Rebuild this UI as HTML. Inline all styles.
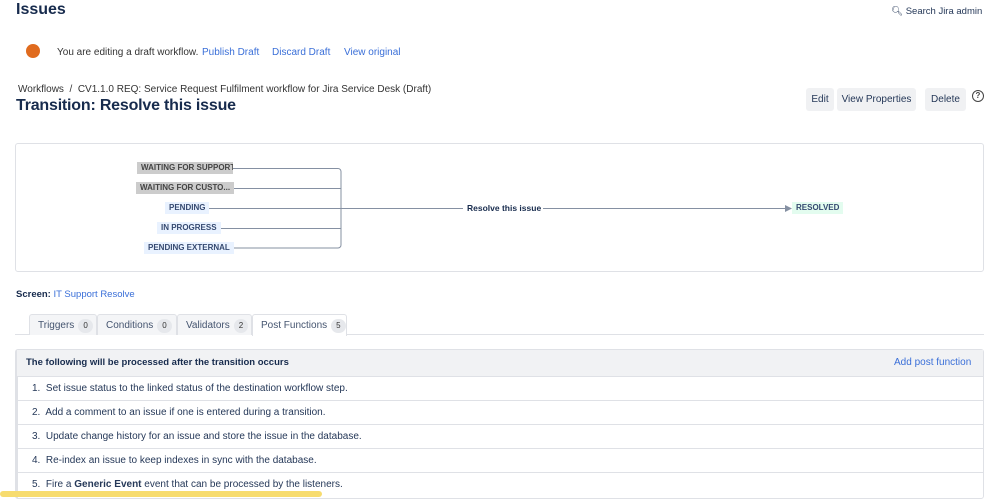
<!DOCTYPE html>
<html><head><meta charset="utf-8"><style>
*{margin:0;padding:0;box-sizing:border-box}
body{width:998px;height:496px;overflow:hidden;background:#fff;font-family:"Liberation Sans",sans-serif;color:#172b4d;position:relative;font-size:10px}
.a{position:absolute;white-space:nowrap}
.link{color:#3a6fd8}
.btn{position:absolute;background:#f0f1f3;border-radius:3px;height:23px;line-height:23px;font-size:10px;color:#253858;text-align:center}
.lz{position:absolute;white-space:nowrap;height:12px;line-height:12px;font-size:8px;font-weight:bold;padding:0 4px;color:#354970;overflow:hidden}
.tab{position:absolute;top:314px;height:21px;line-height:21px;font-size:10px;color:#44546f;background:#f4f5f7;border:1px solid #dfe1e6;border-bottom:none;padding-left:8px;border-radius:3px 3px 0 0;white-space:nowrap}
.cnt{display:inline-block;background:#e6e8ec;border-radius:8px;font-size:8px;padding:0 5px;line-height:14px;margin-left:4px;color:#333}
.row{position:absolute;left:17px;width:966px;height:24px;line-height:24px;border-top:1px solid #dfe1e6;font-size:10px;padding-left:15px;color:#253858;white-space:nowrap}
</style></head><body>
<div class="a" style="left:16px;top:1px;font-size:16px;font-weight:bold;color:#172b4d">Issues</div>
<div class="a" style="left:891px;top:6px;font-size:9.5px;color:#253858">&#128269;&#xFE0E; Search Jira admin</div>
<div class="a" style="left:26px;top:44px;width:14px;height:14px;border-radius:50%;background:#e06b1e"></div>
<div class="a" style="left:57px;top:47px;font-size:10px;color:#333">You are editing a draft workflow.</div>
<div class="a link" style="left:202px;top:47px;font-size:10px">Publish Draft</div>
<div class="a link" style="left:272px;top:47px;font-size:10px">Discard Draft</div>
<div class="a link" style="left:344px;top:47px;font-size:10px">View original</div>
<div class="a" style="left:18px;top:84px;font-size:10px;color:#333">Workflows &nbsp;/ &nbsp;CV1.1.0 REQ: Service Request Fulfilment workflow for Jira Service Desk (Draft)</div>
<div class="a" style="left:16px;top:97px;font-size:16px;color:#172b4d;font-weight:bold;letter-spacing:-0.2px">Transition: Resolve this issue</div>
<div class="btn" style="left:806px;top:88px;width:28px">Edit</div>
<div class="btn" style="left:837px;top:88px;width:79px">View Properties</div>
<div class="btn" style="left:925px;top:88px;width:41px">Delete</div>
<div class="a" style="left:972px;top:90px;width:12px;height:12px;border:1.3px solid #444;border-radius:50%;font-size:8px;line-height:10px;text-align:center;font-weight:bold;color:#444">?</div>

<div class="a" style="left:15px;top:143px;width:969px;height:129px;border:1px solid #dfe1e6;border-radius:3px"></div>
<svg class="a" style="left:0;top:0" width="998" height="300">
<g stroke="#8590a2" stroke-width="1" fill="none">
<path d="M232 168.5H338a3 3 0 0 1 3 3V245a3 3 0 0 1-3 3H224"/>
<path d="M234 188.5H341M205 208.5H463M537 208.5H785M214 228.5H341"/>
</g>
<path d="M785 205L792 208.5L785 212Z" fill="#8590a2"/>
</svg>
<div class="lz" style="left:137px;top:162px;background:#ccc;color:#444;width:96px">WAITING FOR SUPPORT</div>
<div class="lz" style="left:136px;top:182px;background:#ccc;color:#444;width:98px">WAITING FOR CUSTO...</div>
<div class="lz" style="left:165px;top:202px;background:#e9f2ff">PENDING</div>
<div class="lz" style="left:157px;top:222px;background:#e9f2ff">IN PROGRESS</div>
<div class="lz" style="left:144px;top:242px;background:#e9f2ff">PENDING EXTERNAL</div>
<div class="a" style="left:465px;top:203px;font-size:8.5px;font-weight:bold;background:#fff;padding:0 2px">Resolve this issue</div>
<div class="lz" style="left:792px;top:202px;background:#e3fcef">RESOLVED</div>

<div class="a" style="left:16px;top:289px;font-size:9.5px"><b>Screen:</b> <span class="link">IT Support Resolve</span></div>
<div class="a" style="left:15px;top:334px;width:969px;border-top:1px solid #dfe1e6"></div>
<div class="tab" style="left:29px;width:68px">Triggers<span class="cnt">0</span></div>
<div class="tab" style="left:97px;width:80px">Conditions<span class="cnt">0</span></div>
<div class="tab" style="left:177px;width:75px">Validators<span class="cnt">2</span></div>
<div class="tab" style="left:252px;width:95px;background:#fff;height:22px">Post Functions<span class="cnt">5</span></div>

<div class="a" style="left:15px;top:349px;width:969px;height:150px;border:1px solid #dfe1e6;border-left:3px solid #dfe1e6;border-radius:3px"></div>
<div class="a" style="left:17px;top:350px;width:966px;height:26px;background:#f1f2f4"></div>
<div class="a" style="left:26px;top:357px;font-size:9.5px;font-weight:bold">The following will be processed after the transition occurs</div>
<div class="a link" style="left:894px;top:357px;font-size:10px">Add post function</div>
<div class="row" style="top:376px">1.&nbsp; Set issue status to the linked status of the destination workflow step.</div>
<div class="row" style="top:400px">2.&nbsp; Add a comment to an issue if one is entered during a transition.</div>
<div class="row" style="top:424px">3.&nbsp; Update change history for an issue and store the issue in the database.</div>
<div class="row" style="top:448px">4.&nbsp; Re-index an issue to keep indexes in sync with the database.</div>
<div class="row" style="top:472px">5.&nbsp; Fire a <b>Generic Event</b> event that can be processed by the listeners.</div>
<div class="a" style="left:0;top:491px;width:322px;height:6px;background:#f7dc6f;border-radius:3px"></div>
</body></html>
